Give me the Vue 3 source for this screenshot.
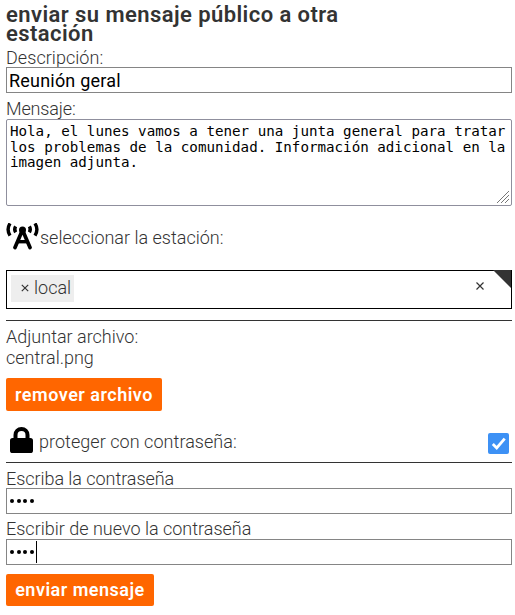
<script setup>
import { ref } from 'vue'

const description = ref('Reunión geral')
const message = ref('Hola, el lunes vamos a tener una junta general para tratar los problemas de la comunidad. Información adicional en la imagen adjunta.')
const stations = ref(['local'])
const locked = ref(true)
</script>

<template>
  <form class="page" @submit.prevent>
    <h1 class="title">enviar su mensaje público a otra estación</h1>

    <label class="label l-desc">Descripción:</label>
    <input v-model="description" class="field" type="text" />

    <label class="label l-msg">Mensaje:</label>
    <div class="area">
      <textarea v-model="message" class="message" spellcheck="false"></textarea>
      <svg class="grip" viewBox="0 0 14 14"><path d="M1 13L13 1M5 13l8-8M9 13l4-4" /></svg>
    </div>

    <div class="station">
      <svg class="tower" viewBox="0 0 33 27">
        <g fill="none" stroke="#000">
          <path stroke-width="3.400" d="M4 .4Q.2 6.500 4 12.600M29 .4Q32.800 6.500 29 12.600" />
          <path stroke-width="3.400" d="M9.600 3.400Q7.800 6.500 9.600 9.400M23.400 3.400Q25.200 6.500 23.400 9.400" />
          <path stroke-width="3.700" stroke-linecap="round" d="M16.500 7L9 24.600M16.500 7L24 24.600" />
          <path stroke-width="3.400" d="M12 18.700h9" />
        </g>
        <circle cx="16.500" cy="7" r="3.500" />
      </svg>
      <span class="l-station">seleccionar la estación:</span>
    </div>

    <div class="select">
      <span v-for="s in stations" :key="s" class="tag">
        <svg class="cross" viewBox="0 0 8 8"><path d="M.8.8l6.400 6.400M7.200.8L.8 7.200" /></svg>
        <span>{{ s }}</span>
      </span>
      <svg class="cross clear" viewBox="0 0 8 8"><path d="M.5.5l7 7M7.500.5l-7 7" /></svg>
      <i class="corner"></i>
    </div>

    <div class="attach">
      <div class="l-attach">Adjuntar archivo:</div>
      <div class="l-file">central.png</div>
    </div>
    <button class="btn remove" type="button">remover archivo</button>

    <div class="protect">
      <svg class="lock" viewBox="0 0 23 26">
        <path fill="none" stroke="#000" stroke-width="4" d="M5.500 13V8a6 6 0 0 1 12 0v5" />
        <rect y="11" width="23" height="15" rx="2.600" />
      </svg>
      <span class="l-protect">proteger con contraseña:</span>
      <span class="check" role="checkbox" :aria-checked="locked" @click="locked = !locked">
        <svg v-if="locked" viewBox="0 0 21 21"><path d="M4.800 11l3.900 3.900 8-9.200" /></svg>
      </span>
    </div>

    <label class="label l-pass">Escriba la contraseña</label>
    <div class="field secret"><i v-for="n in 4" :key="n" class="dot"></i></div>
    <label class="label l-again">Escribir de nuevo la contraseña</label>
    <div class="field secret"><i v-for="n in 4" :key="n" class="dot"></i><i class="caret"></i></div>
    <button class="btn send" type="submit">enviar mensaje</button>
  </form>
</template>

<style>
body { background: #fff; }
</style>

<style scoped>
* { box-sizing: border-box; }
.page {
  display: flex;
  flex-direction: column;
  align-items: flex-start;
  width: 515px;
  height: 615px;
  padding: 5px 3px 0 6px;
  overflow: hidden;
  font: 300 18px/20px Roboto, "Liberation Sans", sans-serif;
  color: #333;
  white-space: nowrap;
}
.title {
  width: 350px;
  height: 38px;
  margin: 0;
  font-size: 22px;
  font-weight: 600;
  line-height: 19px;
  letter-spacing: .43px;
  white-space: normal;
}
.label { height: 20px; }
.l-desc { margin-top: 5px; height: 19px; letter-spacing: .05px; }
.field {
  width: 506px;
  height: 26px;
  padding: 0 2px;
  border: 1px solid #858585;
  background: #fff;
  color: #000;
  font: 400 18px Roboto, sans-serif;
  letter-spacing: .2px;
  outline: 0;
}
.l-msg { margin-top: 6px; letter-spacing: -.15px; }
.area { display: grid; width: 506px; height: 87px; }
.message {
  grid-area: 1 / 1;
  width: 506px;
  height: 87px;
  padding: 4px 3px;
  border: 1px solid #8f8f9d;
  border-radius: 2px;
  resize: none;
  outline: 0;
  overflow: hidden;
  background: #fff;
  color: #000;
  font: 14.200px/15.500px "DejaVu Sans Mono", monospace;
}
.grip {
  grid-area: 1 / 1;
  place-self: end;
  width: 14px;
  height: 14px;
  margin: 0 2px 2px 0;
  fill: none;
  stroke: #777;
}
.station { display: flex; height: 27px; margin-top: 17px; }
.tower { width: 33px; height: 27px; }
.l-station { margin: 5px 0 0 1px; }
.select {
  display: flex;
  width: 506px;
  height: 39px;
  margin-top: 20px;
  padding: 4px 0 0 4px;
  border: 1px solid #000;
}
.tag {
  display: flex;
  align-items: center;
  gap: 5px;
  width: 63px;
  height: 27px;
  padding: 0 0 1px 10px;
  background: #eee;
}
.cross { width: 8px; height: 8px; fill: none; stroke: #333; stroke-width: 1.200; }
.clear { margin: 7px 9px 0 auto; }
.corner {
  width: 18px;
  height: 18px;
  margin-top: -5px;
  background: #333;
  clip-path: polygon(0 0, 100% 0, 100% 100%);
}
.attach {
  width: 506px;
  height: 48px;
  margin-top: 11px;
  padding-top: 5px;
  border-top: 1px solid #333;
  line-height: 21px;
}
.btn {
  height: 33px;
  padding: 1px 0 0;
  border: 0;
  border-radius: 2px;
  background: #f60;
  color: #fff;
  font: 600 18px/32px Roboto, sans-serif;
  letter-spacing: .5px;
}
.remove { width: 156px; margin-top: 10px; }
.protect {
  display: flex;
  width: 506px;
  height: 52px;
  padding: 16px 3px 0 4px;
  border-bottom: 1px solid #333;
}
.lock { width: 23px; height: 26px; }
.l-protect { margin: 5px 0 0 6px; letter-spacing: .05px; }
.check {
  width: 21px;
  height: 21px;
  margin: 6px 0 0 auto;
  border-radius: 2px;
  background: #3d91f5;
}
.check svg { display: block; fill: none; stroke: #fff; stroke-width: 2.800; }
.l-pass { margin-top: 6px; height: 19px; letter-spacing: -.05px; }
.l-again { margin-top: 5px; }
.secret { display: flex; align-items: center; gap: 2.700px; padding-left: 3px; }
.dot { width: 4px; height: 4px; border-radius: 50%; background: #000; }
.caret { width: 1px; height: 22px; margin-left: -1px; background: #000; }
.send { width: 148px; height: 32px; margin-top: 9px; padding: 0; }
</style>
